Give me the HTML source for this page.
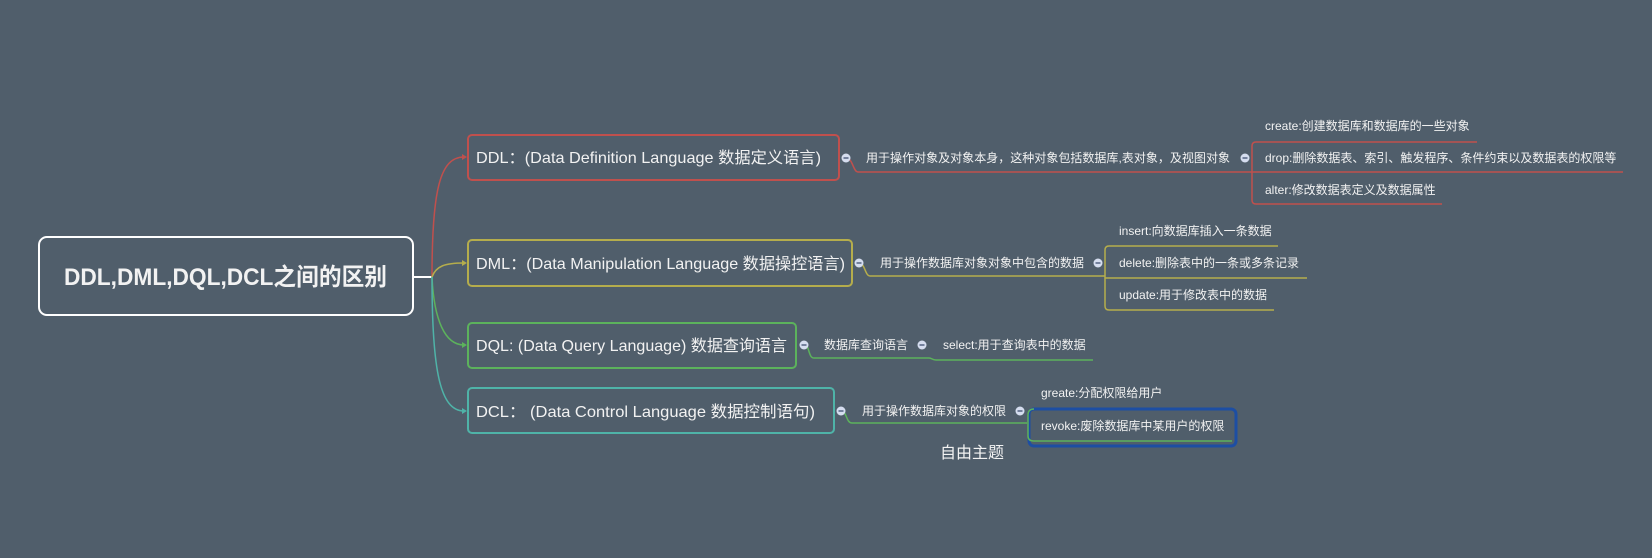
<!DOCTYPE html>
<html><head><meta charset="utf-8"><style>
html,body{margin:0;padding:0;background:#505e6b;}
svg{display:block}
text{font-family:"Liberation Sans","Noto Sans CJK SC",sans-serif;fill:#f2f2f2;}
.s{font-size:12px}
.b{font-size:16px}
</style></head><body>
<svg width="1652" height="558" viewBox="0 0 1652 558" xmlns="http://www.w3.org/2000/svg">
<rect width="1652" height="558" fill="#505e6b"/>
<defs>
<g id="tg"><circle r="4.5" fill="#d5ddef"/><rect x="-2.5" y="-0.7" width="5" height="1.4" fill="#4a5a7a"/></g>
</defs>
<!-- root -->
<rect x="39" y="237" width="374" height="78" rx="8" fill="none" stroke="#fff" stroke-width="2"/>
<text x="64" y="285" font-size="24" font-weight="bold" textLength="323" lengthAdjust="spacingAndGlyphs">DDL,DML,DQL,DCL之间的区别</text>
<line x1="413" y1="277" x2="432" y2="277" stroke="#fff" stroke-width="2"/>
<!-- connectors -->
<path d="M432 277 C 432 190, 440 157, 464 157" fill="none" stroke="#c0504d" stroke-width="1.5"/>
<path d="M432 277 C 436 266, 445 263, 464 263" fill="none" stroke="#b5ad4c" stroke-width="1.5"/>
<path d="M432 277 C 434 320, 445 345, 464 345" fill="none" stroke="#5cb25c" stroke-width="1.5"/>
<path d="M432 277 C 432 370, 440 411, 464 411" fill="none" stroke="#4fb3a8" stroke-width="1.5"/>
<path d="M462 154 L467 157 L462 160Z" fill="#c0504d"/>
<path d="M462 260 L467 263 L462 266Z" fill="#b5ad4c"/>
<path d="M462 342 L467 345 L462 348Z" fill="#5cb25c"/>
<path d="M462 408 L467 411 L462 414Z" fill="#4fb3a8"/>
<!-- boxes -->
<rect x="468" y="135" width="371" height="45" rx="4" fill="none" stroke="#c0504d" stroke-width="2"/>
<text class="b" x="476" y="163" textLength="345" lengthAdjust="spacingAndGlyphs">DDL：(Data Definition Language 数据定义语言)</text>
<rect x="468" y="240" width="384" height="46" rx="4" fill="none" stroke="#b5ad4c" stroke-width="2"/>
<text class="b" x="476" y="269" textLength="369" lengthAdjust="spacingAndGlyphs">DML：(Data Manipulation Language 数据操控语言)</text>
<rect x="468" y="323" width="328" height="45" rx="4" fill="none" stroke="#5cb25c" stroke-width="2"/>
<text class="b" x="476" y="351" textLength="311" lengthAdjust="spacingAndGlyphs">DQL: (Data Query Language) 数据查询语言</text>
<rect x="468" y="388" width="366" height="45" rx="4" fill="none" stroke="#4fb3a8" stroke-width="2"/>
<text class="b" x="476" y="417" textLength="339" lengthAdjust="spacingAndGlyphs">DCL： (Data Control Language 数据控制语句)</text>

<!-- DDL branch -->
<path d="M846 158 C 853 158, 853 172, 858 172 L1252 172" fill="none" stroke="#c0504d" stroke-width="1.5"/>
<text class="s" x="866" y="162" textLength="364" lengthAdjust="spacingAndGlyphs">用于操作对象及对象本身，这种对象包括数据库,表对象，及视图对象</text>
<path d="M1477 142 L1256 142 Q1252 142 1252 146 L1252 200 Q1252 204 1256 204 L1442 204 M1252 172 L1623 172" fill="none" stroke="#c0504d" stroke-width="1.5"/>
<text class="s" x="1265" y="130">create:创建数据库和数据库的一些对象</text>
<text class="s" x="1265" y="162">drop:删除数据表、索引、触发程序、条件约束以及数据表的权限等</text>
<text class="s" x="1265" y="194">alter:修改数据表定义及数据属性</text>
<use href="#tg" x="846" y="158"/>
<use href="#tg" x="1245" y="158"/>

<!-- DML branch -->
<path d="M859 263 C 865 263, 865 276, 870 276 L1105 276" fill="none" stroke="#b5ad4c" stroke-width="1.5"/>
<text class="s" x="880" y="267" textLength="204" lengthAdjust="spacingAndGlyphs">用于操作数据库对象对象中包含的数据</text>
<path d="M1278 246 L1109 246 Q1105 246 1105 250 L1105 306 Q1105 310 1109 310 L1274 310 M1105 278 L1307 278" fill="none" stroke="#b5ad4c" stroke-width="1.5"/>
<text class="s" x="1119" y="235">insert:向数据库插入一条数据</text>
<text class="s" x="1119" y="267">delete:删除表中的一条或多条记录</text>
<text class="s" x="1119" y="299">update:用于修改表中的数据</text>
<use href="#tg" x="859" y="263"/>
<use href="#tg" x="1098" y="263"/>

<!-- DQL branch -->
<path d="M804 345 C 810 345, 808 358, 814 358 L929 358 C 932 358, 932 360, 936 360 L1093 360" fill="none" stroke="#5cb25c" stroke-width="1.5"/>
<text class="s" x="824" y="349">数据库查询语言</text>
<text class="s" x="943" y="349">select:用于查询表中的数据</text>
<use href="#tg" x="804" y="345"/>
<use href="#tg" x="922" y="345"/>

<!-- DCL branch -->
<path d="M841 411 C 847 411, 846 423, 852 423 L1027 423" fill="none" stroke="#5cb25c" stroke-width="1.5"/>
<text class="s" x="862" y="415">用于操作数据库对象的权限</text>
<text class="s" x="1041" y="397">greate:分配权限给用户</text>
<rect x="1029" y="409" width="207" height="37" rx="5" fill="none" stroke="#1d4ea3" stroke-width="3"/>
<path d="M1034 409 Q1028 409 1028 415 L1028 436 Q1028 441 1034 441 L1232 441" fill="none" stroke="#5cb25c" stroke-width="1.5"/>
<text class="s" x="1041" y="430">revoke:废除数据库中某用户的权限</text>
<use href="#tg" x="841" y="411"/>
<use href="#tg" x="1020" y="411"/>
<text x="940" y="458" font-size="16">自由主题</text>
</svg>
</body></html>
